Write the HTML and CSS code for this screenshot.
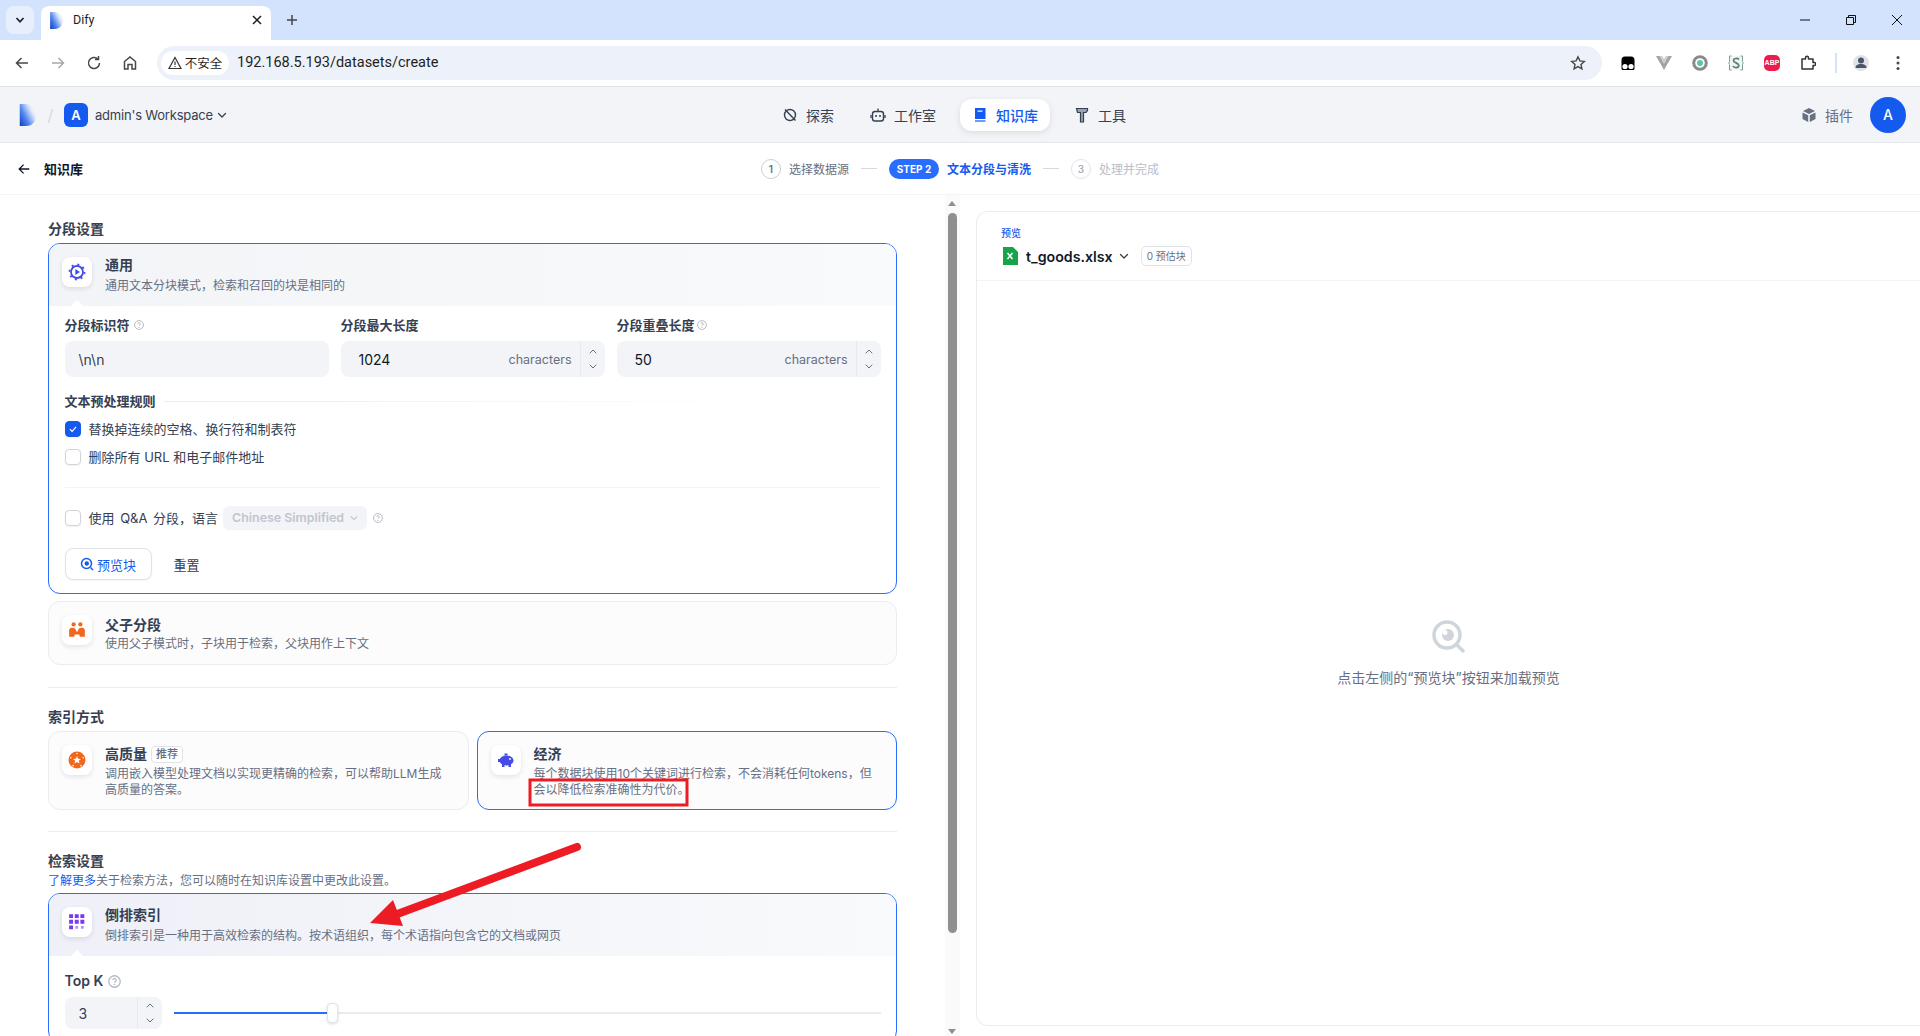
FILE: index.html
```html
<!DOCTYPE html>
<html lang="zh">

<head>
    <meta charset="UTF-8">
    <meta name="viewport" content="width=device-width, initial-scale=1.0">
    <title>Dify</title>
    <link rel="stylesheet" href="styles.css">
</head>

<body>
    <svg class="defs" width="0" height="0">
        <defs>
            <linearGradient id="logo-grad" x1="0" y1="1" x2="1" y2="0.3">
                <stop offset="0" stop-color="#0b3fc4" />
                <stop offset="0.4" stop-color="#4f83ee" />
                <stop offset="0.8" stop-color="#dfe8fb" />
                <stop offset="1" stop-color="#f6f8fe" />
            </linearGradient>
            <symbol id="logo" viewBox="0 0 18 24">
                <path fill="url(#logo-grad)" d="M0 0h7c6.5 0 11 5 11 12s-4.500 12-11 12H0z" />
            </symbol>
            <symbol id="help" viewBox="0 0 12 12">
                <circle cx="6" cy="6" r="5.300" fill="none" stroke="currentColor" stroke-width="1.200" />
                <path d="M4.500 4.700a1.500 1.500 0 1 1 2.300 1.300c-.6.300-.8.600-.8 1.100" fill="none" stroke="currentColor" stroke-width="1.200" />
                <circle cx="6" cy="8.800" r=".7" fill="currentColor" />
            </symbol>
            <symbol id="chev" viewBox="0 0 12 12">
                <path d="M2.500 4.500 6 8l3.500-3.500" fill="none" stroke="currentColor" stroke-width="1.300" stroke-linecap="round" stroke-linejoin="round" />
            </symbol>
            <symbol id="spin" viewBox="0 0 10 26">
                <path d="M2 7l3-3 3 3M2 19l3 3 3-3" fill="none" stroke="currentColor" stroke-linecap="round" stroke-linejoin="round" />
            </symbol>
            <symbol id="back" viewBox="0 0 16 16">
                <path d="M14 8H2.500M7.500 3l-5 5 5 5" fill="none" stroke="currentColor" stroke-width="1.500" />
            </symbol>
            <symbol id="check" viewBox="0 0 16 16">
                <path d="M4.500 8.300l2.500 2.400 4.500-5" fill="none" stroke="#fff" stroke-width="1.300" />
            </symbol>
        </defs>
    </svg>

    <div class="tabstrip">
        <div class="tab-menu">
            <svg class="ico-10" viewBox="0 0 10 10"><path d="M1.500 3 5 6.800 8.500 3" fill="none" stroke="#1f1f1f" stroke-width="1.700" /></svg>
        </div>
        <div class="tab">
            <svg class="tab-logo"><use href="#logo" /></svg>
            <span class="tab-title">Dify</span>
            <svg class="ico-10" viewBox="0 0 10 10"><path d="M1 1l8 8M9 1 1 9" stroke="#1f1f1f" stroke-width="1.500" /></svg>
        </div>
        <svg class="tab-add" viewBox="0 0 12 12"><path d="M6 1v10M1 6h10" stroke="#444" stroke-width="1.500" /></svg>
        <div class="win-btns">
            <svg viewBox="0 0 12 12"><path d="M1 6h10" stroke="#111" /></svg>
            <svg viewBox="0 0 12 12"><path d="M1.500 3.500h7v7h-7zM3.500 3.500v-2h7v7h-2" fill="none" stroke="#111" /></svg>
            <svg viewBox="0 0 12 12"><path d="M1 1l10 10M11 1 1 11" stroke="#111" /></svg>
        </div>
    </div>

    <div class="toolbar">
        <div class="tool-btns">
            <svg viewBox="0 0 16 16"><use href="#back" color="#474747" /></svg>
            <svg viewBox="0 0 16 16"><g transform="matrix(-1 0 0 1 16 0)"><use href="#back" color="#a8a8a8" width="16" height="16" /></g></svg>
            <svg viewBox="0 0 16 16"><path d="M13.500 8A5.500 5.500 0 1 1 12 4.200M12.500 1v3.600H9" fill="none" stroke="#474747" stroke-width="1.500" /></svg>
            <svg viewBox="0 0 16 16"><path d="M2.500 14V6.500L8 2l5.500 4.500V14H10V9.500H6V14z" fill="none" stroke="#474747" stroke-width="1.500" /></svg>
        </div>
        <div class="omnibox">
            <div class="chip">
                <svg viewBox="0 0 14 14"><path d="M7 1.500 13 12.500H1zM7 5.500v3.500M7 10v1" fill="none" stroke="#333" stroke-width="1.200" /></svg>
                <span>不安全</span>
            </div>
            <span class="url">192.168.5.193/datasets/create</span>
            <svg class="star" viewBox="0 0 16 16"><path d="M8 1.800l1.900 4.100 4.400.5-3.300 3 .9 4.400L8 11.600l-3.900 2.200.9-4.400-3.300-3 4.400-.5z" fill="none" stroke="#474747" stroke-width="1.400" /></svg>
        </div>
        <div class="ext-list">
            <svg viewBox="0 0 16 16"><path d="M1.500 5a3.500 3.500 0 0 1 3.500-3.500h6A3.500 3.500 0 0 1 14.500 5v8.500a1.500 1.500 0 0 1-1.500 1.500H3a1.500 1.500 0 0 1-1.500-1.500z" fill="#000" /><circle cx="5" cy="11.500" r="2.600" fill="#fff" /><circle cx="11" cy="11.500" r="2.600" fill="#fff" /></svg>
            <svg viewBox="0 0 16 16"><path d="M0 1h6l2 3.500L10 1h6L8 15z" fill="#a3a3a3" /><path d="M3.500 1H6l2 3.500L10 1h2.500L8 9z" fill="#d0d0d0" /></svg>
            <svg viewBox="0 0 16 16"><circle cx="8" cy="8" r="6.300" fill="none" stroke="#8a8a8a" stroke-width="3" /><circle cx="8" cy="8" r="3" fill="#58c4ac" /></svg>
            <svg viewBox="0 0 16 16"><rect x="1.500" y="1" width="13" height="14" fill="#eef7f4" /><path d="M3.500 1H1.500v5.500L.8 8l.7 1.500V15h2M12.500 1h2v5.500l.7 1.500-.7 1.500V15h-2" fill="none" stroke="#7d9c92" /><path d="M11 4.500C10 3 5.500 3 5.500 5.500S10.800 7.800 10.800 10.500 6 13 5 11.200" fill="none" stroke="#5f7f75" stroke-width="1.700" /></svg>
            <span class="ext-abp">ABP</span>
            <svg viewBox="0 0 16 16"><path d="M2 4h3.500V2.800a1.500 1.500 0 0 1 3 0V4H13v3.500h1.200a1.500 1.500 0 0 1 0 3H13V14H2z" fill="none" stroke="#333" stroke-width="1.500" stroke-linejoin="round" /></svg>
            <i class="ext-sep"></i>
            <span class="profile">
                <svg viewBox="0 0 16 16"><circle cx="8" cy="5.500" r="3" fill="#4a5568" /><path d="M2.500 13c0-3 2.500-4 5.500-4s5.500 1 5.500 4z" fill="#4a5568" /></svg>
            </span>
            <svg class="dots" viewBox="0 0 4 16"><circle cx="2" cy="2.500" r="1.500" fill="#474747" /><circle cx="2" cy="8" r="1.500" fill="#474747" /><circle cx="2" cy="13.500" r="1.500" fill="#474747" /></svg>
        </div>
    </div>

    <header class="app-header">
        <div class="brand">
            <svg class="brand-logo"><use href="#logo" /></svg>
            <span class="brand-slash">/</span>
            <span class="ws-avatar">A</span>
            <span class="ws-name">admin's Workspace</span>
            <svg class="ico-12"><use href="#chev" /></svg>
        </div>
        <nav class="nav">
            <a class="nav-item">
                <svg viewBox="0 0 16 16"><circle cx="8" cy="8" r="5.500" fill="none" stroke="#354052" stroke-width="1.400" /><path d="M3 2.500l10.500 11" stroke="#354052" stroke-width="1.400" /></svg>
                探索
            </a>
            <a class="nav-item">
                <svg viewBox="0 0 16 16"><rect x="2.500" y="4.500" width="11" height="9.500" rx="2.500" fill="none" stroke="#354052" stroke-width="1.400" /><path d="M8 1.500v3M1 8v3M15 8v3" stroke="#354052" stroke-width="1.300" /><circle cx="6" cy="9" r="1" fill="#354052" /><circle cx="10" cy="9" r="1" fill="#354052" /></svg>
                工作室
            </a>
            <a class="nav-item nav-active">
                <svg viewBox="0 0 16 16"><path d="M3 1h10.500v11H3z" fill="#155aef" /><path d="M3 13h10.500v2H3z" fill="#6d9cf5" /><path d="M5.500 3.500h5v1.200h-5z" fill="#fff" /></svg>
                知识库
            </a>
            <a class="nav-item">
                <svg viewBox="0 0 16 16"><path d="M2.500 1.500h11v2l-1.500 2H9.500V15h-3V5.500h-3z" fill="#98a2b2" stroke="#354052" stroke-width="1.200" /></svg>
                工具
            </a>
        </nav>
        <div class="header-right">
            <svg class="plugin-ico" viewBox="0 0 16 16"><path d="M8 1l6 3-6 3-6-3z" fill="#676f83" /><path d="M1.500 5.500l5.700 2.800V15l-5.700-3zM14.500 5.500 8.800 8.300V15l5.700-3z" fill="#676f83" /></svg>
            <span class="plugin-text">插件</span>
            <span class="user-avatar">A</span>
        </div>
    </header>

    <div class="subheader">
        <a class="back-link">
            <svg class="ico-14"><use href="#back" /></svg>
            知识库
        </a>
        <div class="steps">
            <span class="step-num">1</span>
            <span class="step-text">选择数据源</span>
            <i class="step-line"></i>
            <span class="step-pill">STEP 2</span>
            <span class="step-text step-current">文本分段与清洗</span>
            <i class="step-line"></i>
            <span class="step-num step-num-off">3</span>
            <span class="step-text step-off">处理并完成</span>
        </div>
    </div>

    <main class="layout">
        <section class="left">
            <h3 class="sec-title">分段设置</h3>
            <div class="card card-active">
                <div class="card-head">
                    <div class="icon-box">
                        <svg viewBox="0 0 18 18"><circle cx="9" cy="9" r="6" fill="none" stroke="#444ce7" stroke-width="1.800" /><circle cx="9" cy="9" r="7.500" fill="none" stroke="#444ce7" stroke-width="1.800" stroke-dasharray="2 3.900" /><path d="M7.300 6v6l4.700-3z" fill="#444ce7" /></svg>
                    </div>
                    <div>
                        <div class="card-title">通用</div>
                        <div class="card-desc">通用文本分块模式，检索和召回的块是相同的</div>
                    </div>
                </div>
                <div class="card-body">
                    <div class="field-row">
                        <div>
                            <label class="field-label">分段标识符<svg class="help"><use href="#help" /></svg></label>
                            <div class="input">\n\n</div>
                        </div>
                        <div>
                            <label class="field-label">分段最大长度</label>
                            <div class="input input-num">
                                <span class="input-val">1024</span>
                                <span class="input-unit">characters</span>
                                <span class="spinner"><svg><use href="#spin" /></svg></span>
                            </div>
                        </div>
                        <div>
                            <label class="field-label">分段重叠长度<svg class="help help-tight"><use href="#help" /></svg></label>
                            <div class="input input-num">
                                <span class="input-val">50</span>
                                <span class="input-unit">characters</span>
                                <span class="spinner"><svg><use href="#spin" /></svg></span>
                            </div>
                        </div>
                    </div>
                    <div class="rule-head">
                        <span>文本预处理规则</span>
                        <i class="rule-line"></i>
                    </div>
                    <div class="check-row check-first">
                        <span class="checkbox checked"><svg><use href="#check" /></svg></span>
                        替换掉连续的空格、换行符和制表符
                    </div>
                    <div class="check-row">
                        <span class="checkbox"></span>
                        删除所有 URL 和电子邮件地址
                    </div>
                    <hr class="body-line">
                    <div class="check-row qa-row">
                        <span class="checkbox"></span>
                        使用 Q&amp;A 分段，语言
                        <span class="lang-select">Chinese Simplified<svg class="ico-10"><use href="#chev" /></svg></span>
                        <svg class="help help-qa"><use href="#help" /></svg>
                    </div>
                    <div class="btn-row">
                        <button class="btn-preview">
                            <svg viewBox="0 0 14 14"><circle cx="6.500" cy="6.500" r="5" fill="none" stroke="#155aef" stroke-width="1.500" /><circle cx="6.800" cy="6.500" r="2.200" fill="#155aef" /><path d="M10.500 10.500 13 13" stroke="#155aef" stroke-width="1.500" /></svg>
                            预览块
                        </button>
                        <button class="btn-reset">重置</button>
                    </div>
                </div>
            </div>
            <div class="card card-plain card-parent">
                <div class="card-head">
                    <div class="icon-box">
                        <svg viewBox="0 0 16 16"><circle cx="5" cy="3" r="1.900" fill="#ef6820" /><circle cx="11" cy="3" r="1.900" fill="#ef6820" /><path d="M1 14V8.500C1 6.500 2.500 6 4 6c1.500 0 2.500.6 3 2L8 10l1-2c.5-1.400 1.500-2 3-2 1.500 0 3 .5 3 2.500V14h-4.500l-.5-2H6l-.5 2z" fill="#ef6820" /></svg>
                    </div>
                    <div>
                        <div class="card-title">父子分段</div>
                        <div class="card-desc">使用父子模式时，子块用于检索，父块用作上下文</div>
                    </div>
                </div>
            </div>

            <hr class="sec-line">
            <h3 class="sec-title">索引方式</h3>
            <div class="index-grid">
                <div class="card card-plain card-index">
                    <div class="card-head">
                        <div class="icon-box">
                            <svg viewBox="0 0 16 16"><circle cx="8" cy="8" r="7.500" fill="#ef6820" /><path d="M8 4.500l1 2.300 2.500.2-1.900 1.600.6 2.400L8 9.800 5.800 11l.6-2.400L4.500 7l2.500-.2z" fill="#fff" /><g fill="#fff"><circle cx="8" cy="2.200" r=".7" /><circle cx="13.500" cy="6" r=".7" /><circle cx="11.500" cy="13" r=".7" /><circle cx="4.500" cy="13" r=".7" /><circle cx="2.500" cy="6" r=".7" /></g></svg>
                        </div>
                        <div>
                            <div class="card-title">高质量<span class="tag">推荐</span></div>
                            <div class="card-desc card-desc-wrap">调用嵌入模型处理文档以实现更精确的检索，可以帮助LLM生成高质量的答案。</div>
                        </div>
                    </div>
                </div>
                <div class="card card-plain card-index card-selected">
                    <div class="card-head">
                        <div class="icon-box">
                            <svg viewBox="0 0 18 16"><path d="M7.500 1.500h3v2h-3z" fill="#444ce7" /><ellipse cx="9.500" cy="8.500" rx="7" ry="5" fill="#444ce7" /><path d="M1 7h3v3H1zM5 12h2.500v3H5zM11.500 12H14v3h-2.500z" fill="#444ce7" /><circle cx="13" cy="7" r=".9" fill="#fff" /></svg>
                        </div>
                        <div>
                            <div class="card-title">经济</div>
                            <div class="card-desc card-desc-wrap">每个数据块使用10个关键词进行检索，不会消耗任何tokens，但会以降低检索准确性为代价。</div>
                        </div>
                    </div>
                </div>
            </div>

            <hr class="sec-line">
            <h3 class="sec-title">检索设置</h3>
            <p class="sec-note"><a>了解更多</a>关于检索方法，您可以随时在知识库设置中更改此设置。</p>
            <div class="card card-active card-search">
                <div class="card-head">
                    <div class="icon-box">
                        <svg viewBox="0 0 16 16"><g fill="#7839ee"><path d="M1 1h3.500v3.500H1zM6 1h3.500v3.500H6z" /><path d="M11 1h3.500v3.500H11zM1 6h3.500v3.500H1zM6 6h3.500v3.500H6zM11 6h3.500v3.500H11zM1 11h3.500v3.500H1z" /></g><g fill="#b692f6"><path d="M6.500 11.500H9V14H6.500zM11.500 11.500H14V14h-2.500z" /></g></svg>
                    </div>
                    <div>
                        <div class="card-title">倒排索引</div>
                        <div class="card-desc">倒排索引是一种用于高效检索的结构。按术语组织，每个术语指向包含它的文档或网页</div>
                    </div>
                </div>
                <div class="card-body topk">
                    <label class="field-label field-label-k">Top K<svg class="help help-k"><use href="#help" /></svg></label>
                    <div class="topk-row">
                        <div class="input input-num input-k">
                            <span class="input-val">3</span>
                            <span class="spinner spinner-k"><svg><use href="#spin" /></svg></span>
                        </div>
                        <div class="slider">
                            <div class="slider-fill"></div>
                            <div class="slider-thumb"></div>
                        </div>
                    </div>
                </div>
            </div>
        </section>

        <div class="scrollbar">
            <i class="sb-arrow sb-up"></i>
            <div class="sb-thumb"></div>
            <i class="sb-arrow sb-down"></i>
        </div>

        <aside class="preview">
            <div class="preview-head">
                <div class="preview-label">预览</div>
                <div class="preview-file">
                    <svg class="xlsx" viewBox="0 0 16 18"><path d="M1 0h10l5 5v13H1z" fill="#16a34a" /><path d="M5.500 6l5 6M10.500 6l-5 6" stroke="#fff" stroke-width="1.500" /></svg>
                    <span class="file-name">t_goods.xlsx</span>
                    <svg class="ico-12 file-chev"><use href="#chev" /></svg>
                    <span class="file-badge">0 预估块</span>
                </div>
            </div>
            <div class="preview-empty">
                <svg class="empty-ico" viewBox="0 0 34 34"><circle cx="15" cy="15" r="13" fill="none" stroke="#d0d5dc" stroke-width="3.500" /><circle cx="16" cy="15" r="6" fill="#d0d5dc" /><circle cx="13" cy="12.500" r="2.500" fill="#fff" /><path d="M25 25l7 7" stroke="#d0d5dc" stroke-width="3.500" /></svg>
                <p>点击左侧的“预览块”按钮来加载预览</p>
            </div>
        </aside>
    </main>

    <svg class="annotation" viewBox="0 0 1920 1036">
        <rect x="530" y="780" width="157" height="25" fill="none" stroke="#ed1c24" stroke-width="3" />
        <path d="M577 847 392 916" stroke="#ed1c24" stroke-width="8" stroke-linecap="round" />
        <path d="M370 923 393 900 403 926z" fill="#ed1c24" />
    </svg>
</body>

</html>
```

FILE: styles.css
```css
* {
    box-sizing: border-box;
}

html,
body {
    margin: 0;
    height: 1036px;
    overflow: hidden;
}

body {
    position: relative;
    background: #fff;
    color: #354052;
    font-family: Inter, "Noto Sans CJK SC", sans-serif;
    font-size: 13px;
}

.defs {
    position: absolute;
}

.ico-10 {
    width: 10px;
    height: 10px;
}

.ico-12 {
    width: 12px;
    height: 12px;
}

.ico-14 {
    width: 14px;
    height: 14px;
}

/* browser chrome */
.tabstrip {
    height: 40px;
    background: #d3e3fd;
    display: flex;
    align-items: flex-end;
}

.tab-menu {
    width: 28px;
    height: 28px;
    margin: 0 7px 6px 6px;
    border-radius: 8px;
    background: #e7effc;
    display: flex;
    align-items: center;
    justify-content: center;
}

.tab {
    width: 230px;
    height: 34px;
    background: #fff;
    border-radius: 8px 8px 0 0;
    display: flex;
    align-items: center;
    padding: 0 9px 6px 9px;
}

.tab-logo {
    width: 13px;
    height: 17px;
    margin-right: 10px;
}

.tab-title {
    flex: 1;
    font: 12.500px/16px Roboto, sans-serif;
    color: #1f1f1f;
}

.tab-add {
    width: 12px;
    height: 12px;
    margin: 0 0 14px 15px;
}

.win-btns {
    margin-left: auto;
    align-self: center;
    display: flex;
    gap: 34px;
    padding-right: 17px;
}

.win-btns svg {
    width: 12px;
    height: 12px;
}

.toolbar {
    height: 47px;
    background: #fff;
    border-bottom: 1px solid #dfe1e5;
    border-radius: 0 10px 0 0;
    display: flex;
    align-items: center;
}

.tool-btns {
    display: flex;
    gap: 20px;
    padding-left: 14px;
    width: 157px;
}

.tool-btns svg {
    width: 16px;
    height: 16px;
}

.omnibox {
    width: 1445px;
    height: 34px;
    background: #edf2fa;
    border-radius: 17px;
    display: flex;
    align-items: center;
    padding: 0 16px 0 4px;
}

.chip {
    width: 68px;
    height: 24px;
    background: #fff;
    border-radius: 12px;
    display: flex;
    align-items: center;
    justify-content: center;
    gap: 3px;
    font: 12.500px/16px "Noto Sans CJK SC", sans-serif;
    color: #1f1f1f;
}

.chip svg {
    width: 14px;
    height: 14px;
}

.url {
    flex: 1;
    margin-left: 8px;
    font: 14.500px/18px Roboto, sans-serif;
    color: #1f1f1f;
}

.star {
    width: 16px;
    height: 16px;
}

.ext-list {
    display: flex;
    align-items: center;
    padding-left: 18px;
    gap: 20px;
}

.ext-list svg {
    width: 16px;
    height: 16px;
}

.ext-abp {
    width: 16px;
    height: 16px;
    background: #ee1c4e;
    border-radius: 5px;
    color: #fff;
    font: 700 7px/16px "Liberation Sans", sans-serif;
    text-align: center;
    white-space: nowrap;
}

.ext-sep {
    width: 2px;
    height: 20px;
    background: #d3e3fd;
    margin: 0 -4px 0 -1px;
}

.profile {
    width: 16px;
    height: 16px;
    border-radius: 50%;
    background: #dfe3e8;
    display: flex;
}

.ext-list .dots {
    width: 4px;
    margin-left: 7px;
}

/* app header */
.app-header {
    height: 56px;
    background: #f2f4f7;
    border-bottom: 1px solid #e2e5ea;
    display: grid;
    grid-template-columns: 1fr auto 1fr;
    align-items: center;
    padding: 0 14px 0 19px;
}

.brand {
    display: flex;
    align-items: center;
}

.brand-logo {
    width: 18px;
    height: 22px;
}

.brand-slash {
    width: 27px;
    text-align: center;
    color: #d5d9e0;
    font-size: 16px;
}

.ws-avatar {
    width: 24px;
    height: 24px;
    border-radius: 6px;
    background: #155aef;
    color: #fff;
    font-weight: 600;
    font-size: 13px;
    line-height: 24px;
    text-align: center;
    margin-right: 7px;
}

.ws-name {
    font-size: 13px;
    letter-spacing: -.2px;
    color: #354052;
    margin-right: 3px;
}

.nav {
    display: flex;
    gap: 12px;
    padding-right: 17px;
}

.nav-item {
    height: 32px;
    padding: 0 12px;
    display: flex;
    align-items: center;
    gap: 8px;
    font-size: 14px;
    color: #354052;
    border-radius: 12px;
}

.nav-item svg {
    width: 16px;
    height: 16px;
}

.nav-active {
    background: #fff;
    color: #155aef;
    font-weight: 500;
    box-shadow: 0 2px 6px rgba(16, 24, 40, .1);
}

.header-right {
    display: flex;
    align-items: center;
    justify-content: flex-end;
}

.plugin-ico {
    width: 16px;
    height: 16px;
    margin-right: 8px;
}

.plugin-text {
    color: #676f83;
    margin-right: 17px;
    font-size: 14px;
}

.user-avatar {
    width: 36px;
    height: 36px;
    border-radius: 50%;
    background: #155aef;
    color: #fff;
    text-align: center;
    line-height: 36px;
    font-size: 14px;
    font-weight: 500;
}

/* step bar */
.subheader {
    height: 52px;
    border-bottom: 1px solid #f2f4f7;
    display: grid;
    grid-template-columns: 1fr auto 1fr;
    align-items: center;
    padding: 0 0 0 17px;
}

.back-link {
    display: flex;
    align-items: center;
    gap: 13px;
    font-weight: 600;
    font-size: 13px;
    color: #101828;
}

.steps {
    display: flex;
    align-items: center;
    padding-right: 17px;
}

.step-num {
    width: 20px;
    height: 20px;
    border: 1px solid #c8ceda;
    border-radius: 50%;
    text-align: center;
    font-size: 10px;
    font-weight: 600;
    line-height: 18px;
    color: #676f83;
    margin-right: 8px;
}

.step-num-off {
    border-color: #e0e3e8;
    color: #a9afbc;
}

.step-text {
    font-size: 12px;
    color: #676f83;
}

.step-current {
    color: #155aef;
    font-weight: 600;
}

.step-off {
    color: #b8bdc8;
}

.step-line {
    width: 16px;
    height: 1px;
    background: #d5d9e0;
    margin: 0 12px;
}

.step-pill {
    width: 50px;
    height: 20px;
    border-radius: 10px;
    background: #296dff;
    color: #fff;
    text-align: center;
    font-size: 10px;
    font-weight: 700;
    line-height: 20px;
    margin-right: 8px;
}

/* main */
.layout {
    display: flex;
    height: 842px;
}

.left {
    width: 945px;
    padding: 24px 48px 0 48px;
    overflow: hidden;
}

.sec-title {
    margin: 0 0 4px;
    font-size: 14px;
    line-height: 20px;
    font-weight: 600;
    color: #354052;
}

.sec-line {
    border: 0;
    height: 1px;
    background: #eaecf0;
    margin: 21px 0 19px;
}

.sec-note {
    margin: -2px 0 4px;
    font-size: 12px;
    line-height: 16px;
    color: #676f83;
}

.sec-note a {
    color: #155aef;
}

.card {
    border: 1px solid #eaecf0;
    border-radius: 12px;
    background: #fcfcfd;
    overflow: hidden;
}

.card-active {
    border: 1.500px solid #296dff;
    background: #fff;
}

.card-selected {
    border-color: #296dff;
}

.card-parent {
    margin: 7px 0 22px;
}

.card-head {
    display: flex;
    gap: 13px;
    height: 62px;
    padding: 13px;
    position: relative;
}

.card-active .card-head {
    background: linear-gradient(90deg, #f2f4f7, #f9fafb);
}

.card-search .card-head {
    background: linear-gradient(90deg, #eff0f8, #f9fafb);
}

/* the little notch that points from the header to the body */
.card-active .card-head::after {
    content: '';
    position: absolute;
    left: 22px;
    bottom: 0;
    border: 6px solid transparent;
    border-top: 0;
    border-bottom-color: #fff;
}

.icon-box {
    width: 30px;
    height: 30px;
    flex: none;
    background: #fff;
    border-radius: 8px;
    box-shadow: 0 2px 5px rgba(16, 24, 40, .1);
    display: flex;
    align-items: center;
    justify-content: center;
}

.icon-box svg {
    width: 18px;
    height: 18px;
}

.card-title {
    font-size: 14px;
    line-height: 20px;
    font-weight: 600;
    color: #354052;
    display: flex;
    align-items: center;
}

.card-active .card-title {
    margin-top: -2px;
}

.card-index .card-title {
    margin-top: -1px;
}

.card-desc {
    font-size: 12px;
    line-height: 16px;
    color: #676f83;
    margin-top: 1px;
}

.card-active .card-desc {
    margin-top: 3px;
}

.card-index .card-desc {
    margin-top: 2px;
}

.card-desc-wrap {
    width: 345px;
}

.tag {
    margin-left: 4px;
    height: 17px;
    padding: 0 4px;
    border: 1px solid #e0e3e8;
    border-radius: 4px;
    background: #fff;
    font-size: 11px;
    line-height: 15px;
    font-weight: 500;
    color: #676f83;
}

.index-grid {
    display: grid;
    grid-template-columns: 1fr 1fr;
    gap: 8px;
}

.card-index {
    height: 79px;
}

.card-body {
    padding: 9px 15.500px 13px 15.500px;
}

.field-row {
    display: grid;
    grid-template-columns: repeat(3, 1fr);
    gap: 12px;
}

.field-label {
    display: flex;
    align-items: center;
    font-size: 13px;
    line-height: 20px;
    font-weight: 600;
    color: #354052;
    margin-bottom: 6px;
}

.field-label-k {
    font-size: 14px;
}

.help {
    flex: none;
    width: 10px;
    height: 10px;
    margin-left: 4px;
    color: #b5bac5;
}

.help-tight {
    margin-left: 2px;
}

.help-qa {
    margin-left: -2px;
}

.help-k {
    width: 13px;
    height: 13px;
    margin-left: 5px;
}

.input {
    height: 36px;
    background: #f2f4f7;
    border-radius: 8px;
    padding-left: 14px;
    display: flex;
    align-items: center;
    font-size: 14px;
    color: #354052;
}

.input-num {
    padding-left: 18px;
    color: #101828;
}

.input-val {
    flex: 1;
}

.input-unit {
    color: #676f83;
    font-size: 12.500px;
    margin-right: 8px;
}

.spinner {
    width: 25px;
    height: 100%;
    border-left: 1px solid #e7e9ee;
    display: flex;
    align-items: center;
    justify-content: center;
    color: #676f83;
}

.spinner svg {
    width: 10px;
    height: 26px;
}

.rule-head {
    display: flex;
    align-items: center;
    gap: 8px;
    margin-top: 14px;
    font-size: 13px;
    line-height: 20px;
    font-weight: 600;
}

.rule-line {
    flex: 1;
    height: 1px;
    background: linear-gradient(90deg, #eaecf0, #fff 85%);
}

.check-row {
    display: flex;
    align-items: center;
    gap: 8px;
    font-size: 13px;
    line-height: 20px;
    color: #354052;
    margin-top: 8px;
}

.check-first {
    margin-top: 8px;
}

.checkbox {
    width: 16px;
    height: 16px;
    border: 1px solid #d0d5dc;
    border-radius: 4px;
    background: #fff;
    box-shadow: 0 1px 2px rgba(16, 24, 40, .06);
}

.checkbox.checked {
    background: #155aef;
    border-color: #155aef;
}

.checkbox svg {
    display: block;
    width: 14px;
    height: 14px;
}

.body-line {
    border: 0;
    height: 1px;
    background: #f2f4f7;
    margin: 20px 0 18px;
}

.qa-row {
    margin-top: 0;
    height: 24px;
    word-spacing: 2px;
}

.lang-select {
    width: 144px;
    height: 24px;
    margin-left: -3px;
    padding: 0 8px 0 9px;
    background: #f2f4f7;
    border-radius: 6px;
    display: flex;
    align-items: center;
    justify-content: space-between;
    font-size: 12.400px;
    font-weight: 600;
    color: #c0c5d0;
    word-spacing: 0;
}

.btn-row {
    display: flex;
    align-items: center;
    margin-top: 18px;
    gap: 8px;
}

.btn-preview {
    width: 87px;
    height: 32px;
    background: #fff;
    border: 1px solid #dfe2e7;
    border-radius: 8px;
    display: flex;
    align-items: center;
    justify-content: center;
    gap: 3px;
    font: 13px "Noto Sans CJK SC", sans-serif;
    color: #155aef;
    box-shadow: 0 1px 2px rgba(16, 24, 40, .05);
}

.btn-preview svg {
    width: 14px;
    height: 14px;
}

.btn-reset {
    width: 42px;
    height: 32px;
    margin-left: 6px;
    padding: 0;
    border: 0;
    background: none;
    font: 13px "Noto Sans CJK SC", sans-serif;
    color: #354052;
}

.topk {
    padding-top: 15px;
}

.topk-row {
    display: flex;
    align-items: center;
    gap: 12px;
}

.input-k {
    width: 97px;
    height: 32px;
    padding-left: 14px;
    color: #354052;
}

.spinner-k {
    width: 25px;
}

.slider {
    flex: 1;
    height: 2px;
    background: #e9ebf0;
    position: relative;
}

.slider-fill {
    width: 160px;
    height: 100%;
    background: #296dff;
}

.slider-thumb {
    position: absolute;
    left: 153px;
    top: -9px;
    width: 11px;
    height: 20px;
    background: #fff;
    border: 1px solid #e0e3e8;
    border-radius: 4px;
    box-shadow: 0 1px 3px rgba(16, 24, 40, .15);
}

/* fake scrollbar of the left pane */
.scrollbar {
    width: 15px;
    height: 100%;
    background: #fafafa;
    position: relative;
}

.sb-thumb {
    position: absolute;
    left: 3px;
    top: 18px;
    width: 9px;
    height: 720px;
    background: #8f8f8f;
    border-radius: 5px;
}

.sb-arrow {
    position: absolute;
    left: 3px;
    border: 4.500px solid transparent;
}

.sb-up {
    top: 6px;
    border-top: 0;
    border-bottom: 5px solid #8f8f8f;
}

.sb-down {
    bottom: 3px;
    border-bottom: 0;
    border-top: 5px solid #8f8f8f;
}

/* right side */
.preview {
    flex: 1;
    margin: 16px 0 11px 16px;
    border: 1px solid #eaecf0;
    border-right: 0;
    border-radius: 12px 0 0 12px;
    display: flex;
    flex-direction: column;
}

.preview-head {
    height: 69px;
    padding: 14px 0 0 25px;
    border-bottom: 1px solid #f2f4f7;
}

.preview-label {
    font-size: 10px;
    line-height: 14px;
    font-weight: 500;
    color: #155aef;
    margin-left: -1px;
}

.preview-file {
    display: flex;
    align-items: center;
    margin-top: 6px;
}

.xlsx {
    width: 16px;
    height: 18px;
    margin-right: 8px;
}

.file-name {
    font-size: 14.200px;
    font-weight: 600;
    color: #101828;
}

.file-chev {
    margin-left: 5px;
    color: #354052;
}

.file-badge {
    margin-left: 11px;
    height: 20px;
    padding: 0 5px;
    border: 1px solid #dfe2e7;
    border-radius: 5px;
    font-size: 10px;
    line-height: 18px;
    color: #676f83;
}

.preview-empty {
    flex: 1;
    display: flex;
    flex-direction: column;
    align-items: center;
    padding-top: 339px;
}

.empty-ico {
    width: 34px;
    height: 34px;
}

.preview-empty p {
    margin: 15px 0 0;
    font-size: 14px;
    line-height: 18px;
    color: #676f83;
}

/* red markup someone drew over the screenshot */
.annotation {
    position: absolute;
    left: 0;
    top: 0;
    width: 1920px;
    height: 1036px;
    pointer-events: none;
}
```
